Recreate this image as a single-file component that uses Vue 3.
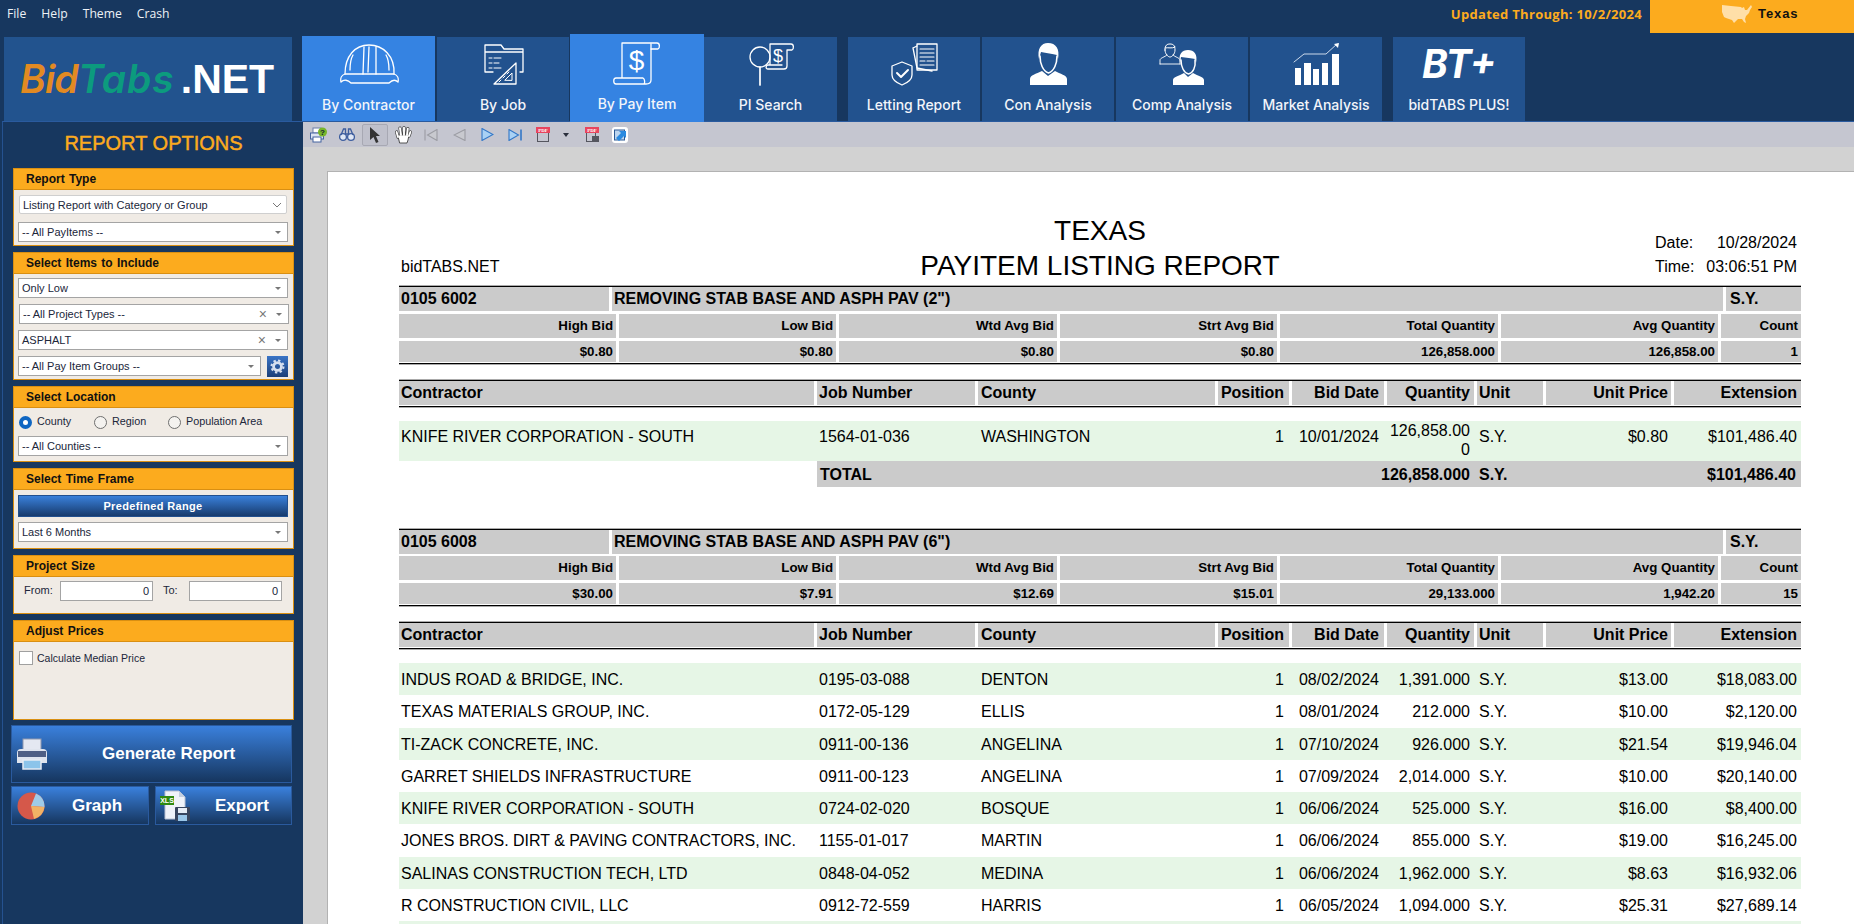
<script setup>
const menus = ['File', 'Help', 'Theme', 'Crash']
const tabs = [
  { key: 'hat', label: 'By Contractor', cls: 'active first' },
  { key: 'job', label: 'By Job', cls: 'n2' },
  { key: 'pay', label: 'By Pay Item', cls: 'raised' },
  { key: 'search', label: 'PI Search', cls: 'wide' },
  { key: 'letting', label: 'Letting Report', cls: 'sep' },
  { key: 'con', label: 'Con Analysis', cls: 'n2' },
  { key: 'comp', label: 'Comp Analysis', cls: 'n2' },
  { key: 'market', label: 'Market Analysis', cls: 'n2' },
  { key: 'plus', label: 'bidTABS PLUS!', cls: 'sep' }
]
const sections = [
  {
    code: '0105 6002', title: 'REMOVING STAB BASE AND ASPH PAV (2")', unit: 'S.Y.',
    stats: ['$0.80', '$0.80', '$0.80', '$0.80', '126,858.000', '126,858.00', '1'],
    rows: [
      { c: 'KNIFE RIVER CORPORATION - SOUTH', j: '1564-01-036', y: 'WASHINGTON', p: '1', d: '10/01/2024', q: '126,858.000', u: 'S.Y.', up: '$0.80', e: '$101,486.40', tall: true }
    ],
    total: { q: '126,858.000', u: 'S.Y.', e: '$101,486.40' }
  },
  {
    code: '0105 6008', title: 'REMOVING STAB BASE AND ASPH PAV (6")', unit: 'S.Y.', tight: true,
    stats: ['$30.00', '$7.91', '$12.69', '$15.01', '29,133.000', '1,942.20', '15'],
    rows: [
      { c: 'INDUS ROAD & BRIDGE, INC.', j: '0195-03-088', y: 'DENTON', p: '1', d: '08/02/2024', q: '1,391.000', u: 'S.Y.', up: '$13.00', e: '$18,083.00' },
      { c: 'TEXAS MATERIALS GROUP, INC.', j: '0172-05-129', y: 'ELLIS', p: '1', d: '08/01/2024', q: '212.000', u: 'S.Y.', up: '$10.00', e: '$2,120.00' },
      { c: 'TI-ZACK CONCRETE, INC.', j: '0911-00-136', y: 'ANGELINA', p: '1', d: '07/10/2024', q: '926.000', u: 'S.Y.', up: '$21.54', e: '$19,946.04' },
      { c: 'GARRET SHIELDS INFRASTRUCTURE', j: '0911-00-123', y: 'ANGELINA', p: '1', d: '07/09/2024', q: '2,014.000', u: 'S.Y.', up: '$10.00', e: '$20,140.00' },
      { c: 'KNIFE RIVER CORPORATION - SOUTH', j: '0724-02-020', y: 'BOSQUE', p: '1', d: '06/06/2024', q: '525.000', u: 'S.Y.', up: '$16.00', e: '$8,400.00' },
      { c: 'JONES BROS. DIRT & PAVING CONTRACTORS, INC.', j: '1155-01-017', y: 'MARTIN', p: '1', d: '06/06/2024', q: '855.000', u: 'S.Y.', up: '$19.00', e: '$16,245.00' },
      { c: 'SALINAS CONSTRUCTION TECH, LTD', j: '0848-04-052', y: 'MEDINA', p: '1', d: '06/06/2024', q: '1,962.000', u: 'S.Y.', up: '$8.63', e: '$16,932.06' },
      { c: 'R CONSTRUCTION CIVIL, LLC', j: '0912-72-559', y: 'HARRIS', p: '1', d: '06/05/2024', q: '1,094.000', u: 'S.Y.', up: '$25.31', e: '$27,689.14' },
      { c: '', j: '', y: '', p: '', d: '', q: '', u: '', up: '', e: '' }
    ]
  }
]
const statLabels = ['High Bid', 'Low Bid', 'Wtd Avg Bid', 'Strt Avg Bid', 'Total Quantity', 'Avg Quantity', 'Count']
</script>

<template>
  <div class="app">
    <header class="topbar">
      <nav class="menu"><span v-for="m in menus" :key="m">{{ m }}</span></nav>
      <div class="updated">Updated Through: 10/2/2024</div>
      <div class="state">
        <svg class="usmap" viewBox="0 0 32 20" width="32" height="20">
          <path fill="#ffdfa8" d="M1 1 L10 2 L20 3 L21 4 L23 3 L24 6 L26 6 L30 1 L31 3 L29 6 L28 9 L25 12 L24 15 L25 19 L23 18 L21 15 L17 15 L15 17 L13 19 L11 16 L8 15 L5 14 L3 13 L1 8 Z" />
        </svg>
        <span>Texas</span>
      </div>
    </header>

    <div class="navrow">
      <div class="logo"><span class="bid">Bid</span><span class="tabs">Tabs</span><span class="net">.NET</span></div>
      <div v-for="t in tabs" :key="t.key" class="tab" :class="t.cls">
        <div v-if="t.key === 'plus'" class="btplus">BT+</div>
        <svg v-else class="ico" viewBox="0 0 60 44" width="60" height="44" fill="none" stroke="#fff" stroke-width="1.3" stroke-linejoin="round" stroke-linecap="round">
          <template v-if="t.key === 'hat'">
            <path d="M6 32 C6 14 16 3 30 3 C44 3 56 14 55 32" />
            <path d="M6 32 H55 C58 33 60 36 59 40 C56 37 53 38 50 41 H12 C9 38 5 37 2 40 C1 36 3 33 6 32 Z" />
            <path d="M24 32 L25 5 M37 32 V5 M30 5 L29 30" />
            <path d="M14 13 C11 18 11 24 11 28 M47 13 C50 18 50 24 50 28" />
          </template>
          <template v-else-if="t.key === 'job'">
            <path d="M20 30 H12 V3 H28 L31 7 H50 V30 H47 M12 10 H50" />
            <path d="M16 16 H19 M21 16 H28 M16 21 H19 M21 21 H26 M16 26 H19 M21 26 H28" stroke-width="1" />
            <path d="M21 42 L43 21 V42 Z" />
            <path d="M32 38 L39 31 V38 Z M26 40 L28 38 M30 36 L32 34 M34 32 L36 30" stroke-width="1" />
          </template>
          <template v-else-if="t.key === 'pay'">
            <path d="M15 36 V1 H50 C53 1 53 6 51 7 H44 V38 C44 42 41 42 39 42 H9 C6 42 6 36 9 36 H36 C38 37 38 41 37 42" />
            <path d="M44 7 V2" />
            <text x="29.5" y="28" class="dollar big">$</text>
          </template>
          <template v-else-if="t.key === 'search'">
            <circle cx="19" cy="15" r="10" />
            <path d="M19 25 V43" stroke-width="1.7" />
            <path d="M29 23 V2 H50 C53 2 53 7 51 8 H46 V24 C46 27 44 27 43 27 H27 C24 27 25 23 27 23 H41" />
            <text x="37" y="20" class="dollar small">$</text>
          </template>
          <template v-else-if="t.key === 'letting'">
            <path d="M29 6 L33 4 M29 6 L33 26 L48 29" />
            <path d="M33 2 H53 V28 H33 Z" />
            <path d="M36 7 H50 M36 11 H50 M36 15 H50 M36 19 H41 M43 19 H50 M36 23 H50" stroke-width="1.1" />
            <path d="M18 20 L28 24 V33 C28 38 23 41 18 43 C13 41 8 38 8 33 V24 Z" />
            <path d="M13 31 L17 35 L24 28" stroke-width="2" />
          </template>
          <template v-else-if="t.key === 'con'">
            <path fill="#fff" stroke="none" d="M12 43 V37 C12 33 18 32 24 29 L30 34 L37 29 C42 32 49 33 49 37 V43 Z" />
            <path fill="#fff" stroke="none" d="M21 17 C19 7 23 1 30 1 C38 1 42 7 40 17 L39 13 C35 12 28 11 23 10 Z" />
            <path stroke-width="1.6" d="M22 14 C22 22 25 29 30.5 31 C36 29 39 22 39 14" />
          </template>
          <template v-else-if="t.key === 'comp'">
            <path stroke-width="0.9" d="M8 22 V18 C8 16 13 15 15 13 M28 22 V18 C28 16 23 15 21 13 M8 22 H28" />
            <path stroke-width="1" d="M13 8 C13 3 15 2 18 2 C21 2 23 3 23 8 C23 12 20 15 18 15 C16 15 13 12 13 8 Z M13 6 C16 5 20 7 23 5" />
            <path fill="#fff" stroke="none" d="M21 43 V38 C21 35 27 34 32 31 L36 35 L41 31 C46 34 52 35 52 38 V43 Z" />
            <path fill="#fff" stroke="none" d="M28 21 C26 12 30 8 36 8 C42 8 46 12 44 21 L43 17 C40 16 34 16 29 15 Z" />
            <path stroke-width="1.5" d="M29 18 C29 25 32 31 36.5 32 C41 31 44 25 43 18" />
          </template>
          <template v-else-if="t.key === 'market'">
            <path fill="#fff" stroke="none" d="M9 26 H15 V43 H9 Z M18 21 H25 V43 H18 Z M27 27 H33 V43 H27 Z M36 21 H42 V43 H36 Z M46 12 H53 V43 H46 Z" />
            <path stroke-width="0.9" stroke="#dfe8f4" d="M8 20 L18 12 H40 L51 2" />
            <path fill="#fff" stroke="none" d="M48 2 L53 1 L52 6 Z" />
          </template>
        </svg>
        <div class="tablabel" :class="{ plain: t.key === 'plus' }">{{ t.label }}</div>
      </div>
    </div>

    <div class="main">
      <aside class="side">
        <h2 class="sidetitle">REPORT OPTIONS</h2>

        <section class="panel p-type">
          <h3>Report Type</h3>
          <div class="body">
            <div class="sel flat"><span class="val">Listing Report with Category or Group</span>
              <svg width="10" height="6" viewBox="0 0 10 6" fill="none" stroke="#777"><path d="M1 1 L5 5 L9 1" /></svg>
            </div>
            <div class="sel"><span class="val">-- All PayItems --</span><i class="caret"></i></div>
          </div>
        </section>

        <section class="panel p-items">
          <h3>Select Items to Include</h3>
          <div class="body">
            <div class="sel"><span class="val">Only Low</span><i class="caret"></i></div>
            <div class="sel shift"><span class="val">-- All Project Types --</span><b class="clear">×</b><i class="caret"></i></div>
            <div class="sel"><span class="val">ASPHALT</span><b class="clear">×</b><i class="caret"></i></div>
            <div class="selrow">
              <div class="sel grow"><span class="val">-- All Pay Item Groups --</span><i class="caret"></i></div>
              <div class="gear">
                <svg width="15" height="15" viewBox="0 0 16 16"><circle cx="8" cy="8" r="4.2" fill="none" stroke="#d7e0ef" stroke-width="3" /><circle cx="8" cy="8" r="6.4" fill="none" stroke="#d7e0ef" stroke-width="2.2" stroke-dasharray="2.5 2.5" /></svg>
              </div>
            </div>
          </div>
        </section>

        <section class="panel p-loc">
          <h3>Select Location</h3>
          <div class="body">
            <div class="radios">
              <label class="radio r1"><i class="dot on"></i>County</label>
              <label class="radio r2"><i class="dot"></i>Region</label>
              <label class="radio"><i class="dot"></i>Population Area</label>
            </div>
            <div class="sel"><span class="val">-- All Counties --</span><i class="caret"></i></div>
          </div>
        </section>

        <section class="panel p-time">
          <h3>Select Time Frame</h3>
          <div class="body">
            <div class="predef">Predefined Range</div>
            <div class="sel"><span class="val">Last 6 Months</span><i class="caret"></i></div>
          </div>
        </section>

        <section class="panel p-size">
          <h3>Project Size</h3>
          <div class="body sizes">
            <span class="from">From:</span><div class="num">0</div>
            <span class="to">To:</span><div class="num">0</div>
          </div>
        </section>

        <section class="panel p-adj">
          <h3>Adjust Prices</h3>
          <div class="body"><label class="check"><i></i>Calculate Median Price</label></div>
        </section>

        <div class="bigbtn gen">
          <svg class="bi" width="32" height="32" viewBox="0 0 32 32">
            <rect x="7" y="1" width="18" height="13" fill="#e4e8f2" stroke="#8f97ad" />
            <path d="M1 15 Q1 11 5 11 H27 Q31 11 31 15 V25 H1 Z" fill="#dfe4ee" />
            <rect x="2" y="13" width="28" height="6" fill="#4f5f85" />
            <rect x="7" y="22" width="18" height="9" fill="#8cc4ea" stroke="#e6ebf3" stroke-width="1.5" />
          </svg>
          <span>Generate Report</span>
        </div>
        <div class="btnrow">
          <div class="bigbtn half graph">
            <svg class="bi" width="28" height="28" viewBox="0 0 28 28">
              <circle cx="14" cy="14" r="13.5" fill="#d5584a" />
              <path d="M14 14 L19 1.5 A13.5 13.5 0 0 1 27.5 15 Z" fill="#9fcbe8" />
              <path d="M14 14 L27.5 15 A13.5 13.5 0 0 1 17 27 Z" fill="#f1b265" />
            </svg>
            <span>Graph</span>
          </div>
          <div class="bigbtn half export">
            <svg class="bi" width="30" height="31" viewBox="0 0 30 31">
              <path d="M5 1 H19 L25 7 V29 H5 Z" fill="#f0f3f9" stroke="#b7c0d2" />
              <path d="M19 1 V7 H25 Z" fill="#c4cfe0" />
              <rect x="0" y="6" width="14" height="9" fill="#2f8a11" />
              <text x="7" y="13" class="xls">XLS</text>
              <rect x="15" y="17" width="15" height="14" rx="1" fill="#39465f" />
              <rect x="18" y="18" width="9" height="5" fill="#e7edf5" />
              <rect x="18" y="25" width="9" height="6" fill="#9ac6e8" />
            </svg>
            <span>Export</span>
          </div>
        </div>
      </aside>

      <div class="viewer">
        <div class="toolbar">
          <div class="tool">
            <svg width="18" height="16" viewBox="0 0 18 16"><rect x="3" y="1" width="8" height="5" fill="#fff" stroke="#6d7ea8" /><rect x="0.5" y="6" width="13" height="6" fill="#dce3f2" stroke="#44639f" /><rect x="3" y="10" width="8" height="5" fill="#fff" stroke="#44639f" /><circle cx="12.5" cy="5" r="4.5" fill="#77b52a" /><text x="12.5" y="8" class="q">?</text></svg>
          </div>
          <div class="tool">
            <svg width="16" height="14" viewBox="0 0 16 14"><circle cx="4" cy="9" r="3.4" fill="#dfe7f5" stroke="#3d5d9e" stroke-width="1.3" /><circle cx="12" cy="9" r="3.4" fill="#dfe7f5" stroke="#3d5d9e" stroke-width="1.3" /><path d="M2 7 L4.5 1 H6.5 V6 H9.5 V1 H11.5 L14 7" fill="none" stroke="#3d5d9e" stroke-width="1.3" /></svg>
          </div>
          <div class="tool selected">
            <svg width="12" height="16" viewBox="0 0 12 16"><path d="M1 0 L11 9 L7 9 L9.5 15 L7 16 L4.5 10 L1 13 Z" fill="#333" /></svg>
          </div>
          <div class="tool">
            <svg width="17" height="18" viewBox="0 0 17 18" stroke-linecap="round" fill="none">
              <g stroke="#444" stroke-width="3.2"><path d="M3 11 L1.6 6 M6 8 L5 2.2 M9 8 L9 1.6 M12 8 L12.8 2.6 M14 10 L15.4 6" /></g>
              <path d="M3 9 H14 L13 14 L12 17 H5 Z" fill="#fff" stroke="#444" stroke-width="0.9" stroke-linejoin="round" />
              <g stroke="#fff" stroke-width="1.9"><path d="M3 11 L1.6 6 M6 9 L5 2.2 M9 9 L9 1.6 M12 9 L12.8 2.6 M14 10 L15.4 6" /></g>
            </svg>
          </div>
          <div class="tool">
            <svg width="14" height="12" viewBox="0 0 14 12"><path d="M13 0.5 V11.5 L3.5 6 Z M1 0.5 V11.5" fill="#c8c9cf" stroke="#9b9ca3" stroke-width="1.1" /></svg>
          </div>
          <div class="tool">
            <svg width="13" height="12" viewBox="0 0 13 12"><path d="M12 0.5 V11.5 L1 6 Z" fill="#c8c9cf" stroke="#9b9ca3" stroke-width="1.1" /></svg>
          </div>
          <div class="tool">
            <svg width="13" height="13" viewBox="0 0 13 13"><path d="M1 0.5 V12.5 L12 6.5 Z" fill="#a9d1f4" stroke="#3277c7" stroke-width="1.1" /></svg>
          </div>
          <div class="tool">
            <svg width="14" height="12" viewBox="0 0 14 12"><path d="M1 0.5 V11.5 L10.5 6 Z" fill="#a9d1f4" stroke="#3277c7" stroke-width="1.1" /><path d="M13 0.5 V11.5" stroke="#3277c7" stroke-width="1.6" /></svg>
          </div>
          <div class="tool">
            <svg width="14" height="15" viewBox="0 0 14 15"><rect x="1.5" y="2" width="11" height="12.5" fill="none" stroke="#55565f" /><rect x="0" y="0" width="14" height="6" fill="#e8455e" /><text x="7" y="5" class="pdf">PDF</text></svg>
          </div>
          <div class="tool w18"><i class="tcaret"></i></div>
          <div class="tool w34">
            <svg width="14" height="15" viewBox="0 0 14 15"><rect x="1.5" y="2" width="9" height="12.5" fill="none" stroke="#55565f" /><rect x="0" y="0" width="14" height="6" fill="#e8455e" /><text x="7" y="5" class="pdf">PDF</text><rect x="7" y="9" width="7" height="6" fill="#55565f" /></svg>
          </div>
          <div class="tool w22">
            <svg width="16" height="16" viewBox="0 0 16 16"><rect width="16" height="16" rx="3" fill="#fff" /><rect x="2.5" y="3" width="10" height="10" fill="#bcd5ef" stroke="#2c5a96" /><path d="M4 11 L9 6 L7 4 H14 V11 L12 9 L7 14 Z" fill="#2a8ae0" /></svg>
          </div>
        </div>

        <div class="stage">
          <div class="page">
            <div class="report">
              <div class="rhead">
                <div class="brand">bidTABS.NET</div>
                <div class="rtitle"><div>TEXAS</div><div>PAYITEM LISTING REPORT</div></div>
                <div class="stamp">
                  <div><span>Date:</span><span>10/28/2024</span></div>
                  <div><span>Time:</span><span>03:06:51 PM</span></div>
                </div>
              </div>

              <div v-for="s in sections" :key="s.code" class="sec">
                <div class="lined stats">
                  <div class="g-item" :class="{ tight: s.tight }">
                    <div class="cell b16">{{ s.code }}</div>
                    <div class="cell b16">{{ s.title }}</div>
                    <div class="cell b16 unitc">{{ s.unit }}</div>
                  </div>
                  <div class="g-stats">
                    <div v-for="l in statLabels" :key="l" class="cell st">{{ l }}</div>
                  </div>
                  <div class="g-stats vals">
                    <div v-for="(v, i) in s.stats" :key="i" class="cell st">{{ v }}</div>
                  </div>
                </div>

                <div class="lined thead">
                  <div class="g-cols hdr">
                    <div class="cell b16">Contractor</div>
                    <div class="cell b16">Job Number</div>
                    <div class="cell b16 cty">County</div>
                    <div class="cell b16 r5">Position</div>
                    <div class="cell b16 r5">Bid Date</div>
                    <div class="cell b16 r4">Quantity</div>
                    <div class="cell b16">Unit</div>
                    <div class="cell b16 r3">Unit Price</div>
                    <div class="cell b16 r4">Extension</div>
                  </div>
                </div>

                <div class="rows">
                  <div v-for="(r, i) in s.rows" :key="i" class="g-cols row" :class="{ tall: r.tall, odd: i % 2 === 0 }">
                    <div class="td">{{ r.c }}</div>
                    <div class="td">{{ r.j }}</div>
                    <div class="td cty">{{ r.y }}</div>
                    <div class="td r5">{{ r.p }}</div>
                    <div class="td r5">{{ r.d }}</div>
                    <div class="td r4 qty">{{ r.q }}</div>
                    <div class="td">{{ r.u }}</div>
                    <div class="td r3">{{ r.up }}</div>
                    <div class="td r4">{{ r.e }}</div>
                  </div>
                </div>

                <div v-if="s.total" class="total">
                  <div class="tl">TOTAL</div>
                  <div class="tq">{{ s.total.q }}</div>
                  <div class="tu">{{ s.total.u }}</div>
                  <div class="te">{{ s.total.e }}</div>
                </div>
              </div>
            </div>
          </div>
        </div>
      </div>
    </div>
  </div>
</template>

<style>
html, body { margin: 0; padding: 0; overflow: hidden; background: #17375f; }
</style>

<style scoped>
.app { width: 1854px; height: 924px; overflow: hidden; background: #17375f; font-family: "Liberation Sans", Arial, sans-serif; display: flex; flex-direction: column; }

.topbar { height: 36px; display: flex; align-items: flex-start; flex: none; }
.menu { display: flex; gap: 15px; padding: 5px 0 0 7px; font: 12.2px/17px "Open Sans", sans-serif; color: #eef2f6; }
.updated { margin-left: auto; padding: 6px 8px 0 0; font: 700 13px/17px "Open Sans", sans-serif; letter-spacing: 0.3px; color: #fcab1e; }
.state { width: 204px; height: 33px; background: #fcab1e; display: flex; align-items: flex-start; padding: 4px 0 0 71px; box-sizing: border-box; gap: 5px; }
.state span { font: 700 13px/20px "Liberation Sans", sans-serif; letter-spacing: 0.9px; color: #111; }

.navrow { height: 85px; flex: none; display: flex; padding-left: 4px; position: relative; z-index: 2; }
.logo { width: 288px; margin-top: 1px; background: #22538e; box-sizing: border-box; padding: 19px 0 0 16px; font-size: 41px; line-height: 46px; white-space: nowrap; }
.bid { color: #e28a22; font-style: italic; font-weight: 600; font-family: "Inter", sans-serif; font-size: 39px; letter-spacing: -0.8px; }
.tabs { color: #0c9b7e; font-style: italic; font-weight: 600; font-family: "Inter", sans-serif; font-size: 39px; letter-spacing: 1px; }
.net { color: #fff; font-weight: 700; margin-left: 6px; font-family: "Liberation Sans", sans-serif; }

.tab { width: 132px; margin-top: 1px; height: 84px; background: #22528e; box-sizing: border-box; padding-top: 5px; display: flex; flex-direction: column; align-items: center; }
.tab.first { width: 133px; margin-left: 10px; }
.tab.active { margin-top: 0; height: 85px; padding-top: 6px; background: #3583e2; }
.tab.n2 { margin-left: 2px; }
.tab.raised { width: 134px; margin-left: 1px; margin-top: -2px; height: 88px; padding-top: 8px; background: #3583e2; }
.tab.wide { width: 133px; }
.tab.sep { margin-left: 11px; }
.ico { flex: none; }
.ico .dollar { fill: #fff; stroke: none; text-anchor: middle; font-family: "Liberation Sans", sans-serif; }
.dollar.big { font-size: 28px; }
.dollar.small { font-size: 18px; }
.tablabel { margin-top: 9px; font: 500 14px/20px "Inter", sans-serif; color: #f2f5fa; white-space: nowrap; }
.tab.raised .tablabel { margin-top: 8px; }
.btplus { height: 44px; font: italic 700 39px/44px "Inter", sans-serif; color: #fff; }

.main { flex: 1; display: flex; min-height: 0; }
.side { width: 301px; margin-left: 2px; flex: none; box-sizing: border-box; border-left: 1px solid #255290; border-top: 1px solid #2a5a9e; padding: 0 0 0 10px; }
.sidetitle { margin: 9px 0 13px; width: 281px; text-align: center; font: 400 20px/24px "Liberation Sans", sans-serif; color: #fcab1e; -webkit-text-stroke: 0.45px #fcab1e; }

.panel { width: 281px; box-sizing: border-box; border: 1px solid #d98f12; background: #f0ebe5; margin-bottom: 6px; }
.panel h3 { margin: 0; height: 20px; box-sizing: content-box; background: #fcab1e; border-bottom: 1px solid #d98f12; padding: 0 0 0 12px; font: 700 12px/20px "Liberation Sans", sans-serif; word-spacing: 1px; color: #111; }
.body { padding: 4px 4px 0; display: flex; flex-direction: column; box-sizing: border-box; font-size: 11px; color: #20263a; }
.p-type { height: 78px; }
.p-type .body { padding-top: 5px; gap: 8px; }
.p-items { height: 128px; }
.p-items .body { gap: 6px; }
.p-loc { height: 76px; }
.p-time { height: 81px; }
.p-time .body { gap: 5px; padding-top: 5px; }
.p-size { height: 59px; }
.p-adj { height: 100px; }

.sel { height: 20px; width: 270px; box-sizing: border-box; background: #fff; border: 1px solid #a4a4a4; display: flex; align-items: center; padding: 0 6px 0 3px; font-size: 11px; color: #20263a; }
.sel.flat { height: 19px; width: 268px; margin-left: 1px; border-color: #cfcfcf; border-radius: 2px; padding: 0 4px 0 3px; }
.sel.shift { margin-left: 1px; }
.sel .val { flex: 1; white-space: nowrap; }
.caret { width: 0; height: 0; border-left: 3px solid transparent; border-right: 3px solid transparent; border-top: 3px solid #777; }
.clear { font-size: 14px; font-weight: 400; color: #777; margin-right: 9px; line-height: 14px; }
.selrow { display: flex; justify-content: space-between; align-items: center; height: 20px; width: 270px; }
.sel.grow { width: 243px; }
.gear { width: 21px; height: 21px; background: linear-gradient(#3a74c6, #1c3f78); display: flex; align-items: center; justify-content: center; }

.radios { display: flex; height: 20px; align-items: center; margin-bottom: 4px; padding-left: 2px; }
.radio { display: flex; align-items: center; gap: 5px; font-size: 10.8px; line-height: 11px; padding-bottom: 2px; }
.radio .dot { margin-top: 2px; margin-left: -1px; }
.r1 { width: 75px; }
.r2 { width: 74px; }
.dot { width: 13px; height: 13px; box-sizing: border-box; border: 1px solid #6f6f6f; border-radius: 50%; background: #f4f2ef; }
.dot.on { border: 4px solid #0f66c2; background: #fff; }

.predef { width: 270px; height: 22px; box-sizing: border-box; background: linear-gradient(#3a80da, #173a6c); border: 1px solid #22508f; color: #fff; font: 700 11px/20px "Liberation Sans", sans-serif; letter-spacing: 0.35px; text-align: center; }

.sizes { flex-direction: row; align-items: center; padding: 4px 0 0 10px; }
.from { width: 36px; margin-top: -2px; }
.to { margin-left: 10px; width: 26px; margin-top: -2px; }
.num { width: 93px; height: 20px; box-sizing: border-box; background: #fff; border: 1px solid #a4a4a4; text-align: right; padding: 0 3px; line-height: 18px; font-size: 11px; }

.check { display: flex; align-items: center; gap: 4px; margin-top: 4px; padding-left: 1px; font-size: 10.5px; line-height: 12px; }
.check i { width: 14px; height: 14px; box-sizing: border-box; background: #fff; border: 1px solid #a0a0a0; margin-top: 1px; }

.bigbtn { box-sizing: border-box; background: linear-gradient(#3a80dc, #16365f); border: 1px solid #2a5a9e; color: #fff; font: 700 17px/22px "Liberation Sans", sans-serif; display: flex; align-items: center; }
.gen { width: 281px; height: 58px; margin: -1px 0 3px -2px; padding-left: 4px; position: relative; }
.gen span { margin-left: 54px; }
.btnrow { display: flex; gap: 6px; margin-left: -2px; width: 281px; }
.half { height: 39px; position: relative; }
.graph { width: 138px; padding-left: 5px; }
.graph span { margin-left: 27px; }
.export { width: 137px; padding-left: 4px; }
.export span { margin-left: 25px; }
.bi { flex: none; }
.xls { font: 700 7px "Liberation Sans", sans-serif; fill: #fff; text-anchor: middle; }

.viewer { flex: 1; min-width: 0; display: flex; flex-direction: column; }
.toolbar { height: 26px; flex: none; box-sizing: border-box; border-top: 1px solid #2a5a9e; background: #c5c6d0; display: flex; align-items: center; padding-left: 2px; }
.tool { width: 28px; height: 22px; box-sizing: border-box; display: flex; align-items: center; justify-content: center; }
.tool.selected { width: 26px; margin: 0 1px; border: 1px solid #a7a8b3; border-radius: 2px; background: #bfc0cb; }
.w18 { width: 18px; }
.w34 { width: 34px; }
.w22 { width: 22px; }
.tcaret { width: 0; height: 0; border-left: 3.5px solid transparent; border-right: 3.5px solid transparent; border-top: 4px solid #2a2f3c; }
.q { font: 700 8px "Liberation Sans", sans-serif; fill: #123; text-anchor: middle; }
.pdf { font: 700 5px "Liberation Serif", serif; fill: #fff; text-anchor: middle; }

.stage { flex: 1; min-height: 0; background: #d2d2d2; padding: 24px 0 0 24px; overflow: hidden; }
.page { height: 100%; box-sizing: border-box; background: #fff; border: 1px solid #b2b2b2; border-right: 0; border-bottom: 0; padding-left: 71px; overflow: hidden; }
.report { width: 1402px; color: #000; font-size: 16px; }

.rhead { height: 113px; display: grid; grid-template-columns: 1fr auto 1fr; align-items: end; box-sizing: border-box; padding-bottom: 2px; }
.brand { padding: 0 0 4px 2px; line-height: 24px; }
.rtitle { text-align: center; font-size: 28px; line-height: 35px; }
.stamp { justify-self: end; width: 142px; padding: 0 4px 4px 0; line-height: 24px; }
.stamp div { display: flex; justify-content: space-between; }

.sec + .sec { margin-top: 41px; }
.lined::before { content: ""; display: block; height: 2px; background: linear-gradient(#aaa 50%, #000 50%); }
.lined::after { content: ""; display: block; height: 2px; background: linear-gradient(#000 50%, #aaa 50%); }
.g-item { display: grid; grid-template-columns: 210px 1111px 75px; gap: 3px; height: 24px; margin-bottom: 3px; }
.g-item.tight { margin-bottom: 2px; }
.g-stats { display: grid; grid-template-columns: 217px 217px 218px 217px 218px 217px 80px; gap: 3px; height: 24px; margin-bottom: 3px; }
.g-stats.vals { height: 21px; margin-bottom: 1px; }
.g-cols { display: grid; grid-template-columns: 415px 158px 237px 71px 92px 87px 66px 125px 127px; column-gap: 3px; }
.thead { margin-top: 14px; }
.hdr { height: 24px; margin-bottom: 1px; }
.cell { background: #cbcbcb; padding: 0 2px; white-space: nowrap; overflow: hidden; }
.b16 { font-weight: 700; font-size: 16px; line-height: 24px; }
.st { font-weight: 700; font-size: 13.3px; line-height: 24px; text-align: right; padding-right: 3px; }
.vals .st { line-height: 21px; }
.unitc { padding-left: 4px; }
.r5 { text-align: right; padding-right: 5px; }
.r4 { text-align: right; padding-right: 4px; }
.r3 { text-align: right; padding-right: 3px; }
.cty { padding-left: 3px; }

.rows { margin-top: 13px; }
.row { height: 32.25px; }
.row.odd { background: #e6f6e6; }
.row.tall { height: 40px; }
.td { padding: 1px 2px 0; box-sizing: border-box; height: 32.25px; line-height: 32.25px; white-space: nowrap; }
.td.cty { padding-left: 3px; }
.td.r5 { padding-right: 5px; }
.td.r4 { padding-right: 4px; }
.td.r3 { padding-right: 3px; }
.tall .td { line-height: 30px; }
.tall .qty { padding-top: 0; height: auto; line-height: 19px; white-space: normal; word-break: break-all; margin-top: -0.5px; }

.total { margin-left: 418px; height: 26px; background: #cbcbcb; display: grid; grid-template-columns: 360px 293px 75px 1fr; font-weight: 700; line-height: 28px; }
.tl { padding-left: 3px; }
.tq { text-align: right; }
.tu { padding-left: 9px; }
.te { text-align: right; padding-right: 5px; }
</style>
